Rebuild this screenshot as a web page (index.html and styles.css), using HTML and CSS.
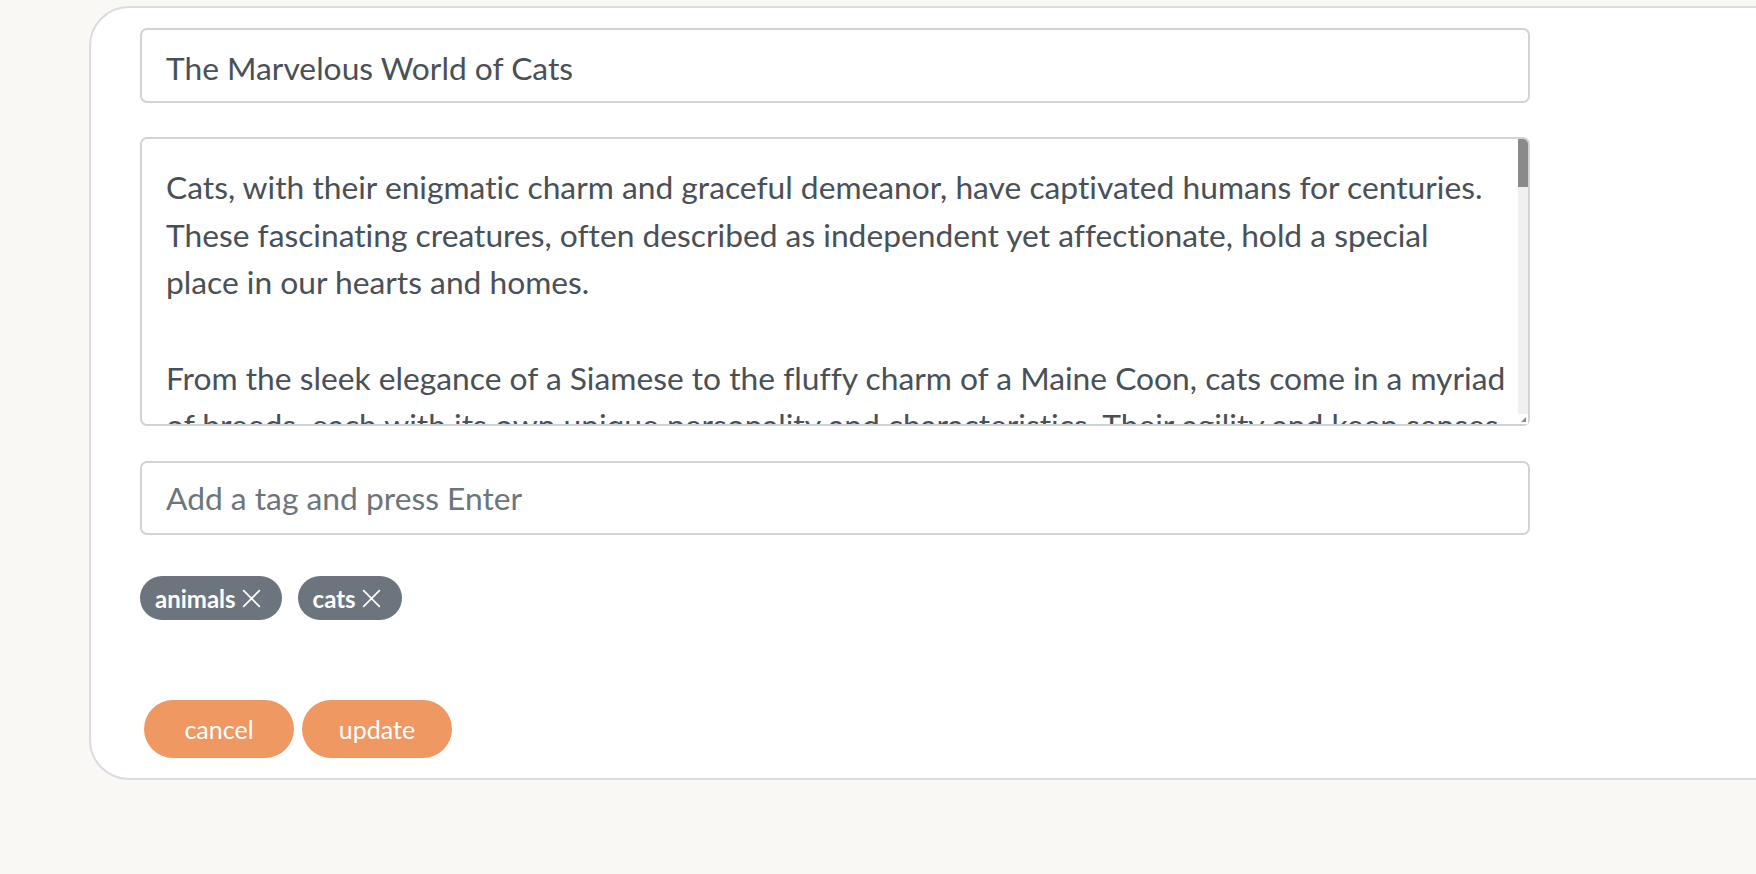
FILE: index.html
```html
<!DOCTYPE html>
<html lang="en">
<head>
<meta charset="utf-8">
<title>Edit post</title>
<link rel="stylesheet" href="styles.css">
</head>
<body>
<div class="card">
  <form class="post-form">
    <input class="field title-field" type="text" value="The Marvelous World of Cats">
    <div class="body-wrap">
      <textarea class="field body-field">Cats, with their enigmatic charm and graceful demeanor, have captivated humans for centuries. These fascinating creatures, often described as independent yet affectionate, hold a special place in our hearts and homes.

From the sleek elegance of a Siamese to the fluffy charm of a Maine Coon, cats come in a myriad of breeds, each with its own unique personality and characteristics. Their agility and keen senses make them exceptional hunters, while their playful antics never fail to bring a smile to our faces.

Cats communicate in many subtle ways. A slow blink is a sign of trust, a gentle head-butt is a mark of affection, and a soft purr can mean contentment or comfort. Learning to read these signals deepens the bond between a cat and its human companions.

Throughout history, cats have been revered, feared and cherished. In ancient Egypt they were honored as symbols of grace and protection, while sailors kept them aboard ships to guard food supplies from rodents. Today, they remain among the most popular pets in the world.

Caring for a cat means providing a balanced diet, fresh water, regular veterinary visits and plenty of enrichment. Scratching posts, climbing trees and interactive toys help keep them active and happy, both in body and in mind.

Whether curled up in a sunny window or exploring every corner of the house, cats remind us to appreciate life's simple pleasures. Their curiosity, independence and quiet companionship make them truly marvelous creatures.</textarea>
      <div class="scrollbar" aria-hidden="true">
        <div class="scroll-thumb"></div>
        <div class="scroll-corner">
          <svg viewBox="0 0 10 10"><path d="M8 3 L8 8 L3 8 Z"/></svg>
        </div>
      </div>
    </div>
    <input class="field tag-field" type="text" placeholder="Add a tag and press Enter">
    <div class="tags">
      <span class="tag">animals<svg class="tag-x" viewBox="0 0 16 16" aria-hidden="true"><path d="M1 1 L15 15 M15 1 L1 15"/></svg></span>
      <span class="tag">cats<svg class="tag-x" viewBox="0 0 16 16" aria-hidden="true"><path d="M1 1 L15 15 M15 1 L1 15"/></svg></span>
    </div>
    <div class="actions">
      <button class="btn" type="button">cancel</button>
      <button class="btn" type="button">update</button>
    </div>
  </form>
</div>
</body>
</html>
```

FILE: styles.css
```css
html, body {
  margin: 0;
  padding: 0;
  height: 100%;
}

body {
  background: #f9f8f5;
  font-family: "Lato", "Noto Sans", sans-serif;
  color: #495057;
  overflow: hidden;
}

.card {
  margin: 6px -80px 0 89px;
  background: #ffffff;
  border: 2px solid #dcdbe0;
  border-radius: 40px;
  padding: 20px 0 20px 49px;
}

.post-form {
  width: 1390px;
  display: flex;
  flex-direction: column;
}

.field {
  box-sizing: border-box;
  width: 100%;
  font-family: "Lato", "Noto Sans", sans-serif;
  font-size: 31.75px;
  line-height: 1.5;
  font-variant-ligatures: none;
  color: #495057;
  background: #ffffff;
  border: 2px solid #d0d4d9;
  border-radius: 7px;
  padding: 11px 24px;
  outline: none;
  margin: 0;
}

.field::placeholder {
  color: #6c757d;
}

.title-field {
  height: 75px;
  padding-top: 13px;
  padding-bottom: 9px;
  margin-bottom: 34px;
}

.body-wrap {
  position: relative;
  height: 289px;
  margin-bottom: 35px;
}

.body-field {
  display: block;
  height: 289px;
  resize: none;
  overflow: hidden;
  padding: 25px 20px 11px 24px;
}

.scrollbar {
  position: absolute;
  top: 2px;
  right: 2px;
  bottom: 2px;
  width: 10px;
  background: #f0f0f0;
  display: flex;
  flex-direction: column;
  border-top-right-radius: 5px;
}

.scroll-thumb {
  height: 48px;
  background: #8a8a8a;
  border-top-right-radius: 5px;
}

.scroll-corner {
  margin-top: auto;
  height: 10px;
  background: #ffffff;
}

.scroll-corner svg {
  display: block;
  width: 10px;
  height: 10px;
  fill: #8a8a8a;
}

.tag-field {
  height: 74px;
  margin-bottom: 41px;
}

.tags {
  display: flex;
  gap: 16px;
  margin-bottom: 80px;
}

.tag {
  display: inline-flex;
  align-items: center;
  height: 44px;
  box-sizing: border-box;
  padding: 0 21px 0 15px;
  border-radius: 22px;
  background: #6c757d;
  color: #ffffff;
  font-weight: 700;
  font-size: 24px;
}

.tag-x {
  width: 19px;
  height: 19px;
  margin-left: 6px;
  fill: none;
  stroke: #ffffff;
  stroke-width: 1.4;
}

.actions {
  display: flex;
  gap: 8px;
  margin-left: 4px;
}

.btn {
  width: 150px;
  height: 58px;
  border: none;
  border-radius: 29px;
  background: #f09862;
  color: #ffffff;
  font-family: "Lato", "Noto Sans", sans-serif;
  font-size: 25px;
  padding: 0;
  cursor: pointer;
}
```
